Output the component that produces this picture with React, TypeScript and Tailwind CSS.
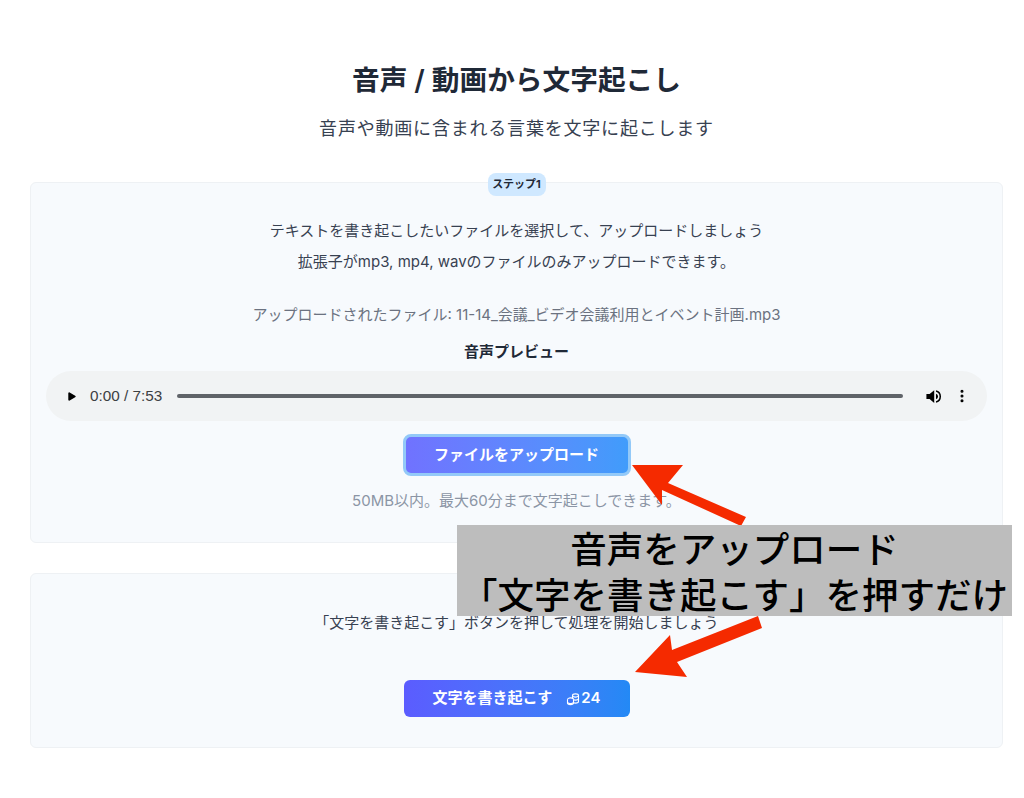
import { Play, MoreVertical } from "lucide-react";

const fontStack = "font-['Inter','Noto_Sans_CJK_JP',sans-serif]";

function CoinsIcon() {
  return (
    <svg width="14" height="14" viewBox="0 0 14 14" fill="none" stroke="currentColor" strokeWidth="1.1">
      <ellipse cx="9.5" cy="3.5" rx="3" ry="1.6" />
      <path d="M6.5 3.5v6c0 .9 1.3 1.6 3 1.6s3-.7 3-1.6v-6" />
      <path d="M6.5 6.5c0 .9 1.3 1.6 3 1.6s3-.7 3-1.6" />
      <ellipse cx="4.5" cy="7.5" rx="3" ry="1.6" fill="#3b74fb" />
      <path d="M1.5 7.5v3.5c0 .9 1.3 1.6 3 1.6s3-.7 3-1.6V7.5" fill="#3b74fb" />
      <path d="M1.5 10c0 .9 1.3 1.6 3 1.6s3-.7 3-1.6" />
    </svg>
  );
}

function SpeakerIcon() {
  return (
    <svg className="ml-[22px]" width="17" height="17" viewBox="0 0 24 24" fill="#000">
      <path d="M2 8.5v7h4.5L13 21V3L6.5 8.5z" />
      <path d="M15.5 8v8a4.2 4.2 0 0 0 0-8z" />
      <path d="M15.5 3.2v2.1a7 7 0 0 1 0 13.4v2.1a9 9 0 0 0 0-17.6z" />
    </svg>
  );
}

function AudioPreview() {
  return (
    <div className="mt-[9px] flex h-[50px] items-center rounded-full bg-[#f1f3f4] pl-[20px] pr-[17px]">
      <Play className="h-[11px] w-[11px] text-black" strokeWidth={0} style={{ fill: "#000" }} />
      <span className="ml-[13px] font-['Liberation_Sans',sans-serif] text-[15.3px] text-[#3c4043]">0:00 / 7:53</span>
      <div className="ml-[15px] h-[4px] flex-1 rounded-full bg-[#5f6368]" />
      <SpeakerIcon />
      <MoreVertical className="ml-[12px] h-[16px] w-[16px] text-black" strokeWidth={2.6} />
    </div>
  );
}

function Arrows() {
  return (
    <svg className="pointer-events-none absolute left-0 top-0" width="1024" height="798" viewBox="0 0 1024 798">
      <polygon points="632,465 683,465 668,483 746,517 741,526 662,490 662,505" fill="#f52a00" />
      <polygon points="635,672 670,635 672,650 758,616 762,628 677,662 687,677" fill="#f52a00" />
    </svg>
  );
}

export default function App() {
  return (
    <div className={`relative h-[798px] w-[1024px] overflow-hidden bg-white ${fontStack}`}>
      <div className="pl-[30px] pr-[21px] pt-[62px]">
        <h1 className="text-center text-[27.7px] font-semibold leading-[37px] text-[#1f2937]">音声 / 動画から文字起こし</h1>
        <p className="mt-[16px] text-center text-[18px] leading-[28px] tracking-[0.8px] text-[#374151]">
          音声や動画に含まれる言葉を文字に起こします
        </p>

        <section className="relative mt-[39px] h-[361px] rounded-md border border-[#eef1f4] bg-[#f7fafd] px-[15px] pt-[32px]">
          <span className="absolute left-1/2 top-[-10px] flex h-[23px] w-[58px] -translate-x-1/2 items-center justify-center rounded-lg bg-[#cfe8ff] text-[11px] font-bold text-[#1f2937]">
            ステップ1
          </span>
          <p className="text-center text-[15px] leading-[31px] text-[#374151]">
            テキストを書き起こしたいファイルを選択して、アップロードしましょう
          </p>
          <p className="text-center text-[15px] leading-[31px] text-[#374151]">
            拡張子がmp3, mp4, wavのファイルのみアップロードできます。
          </p>
          <p className="mt-[22px] text-center text-[15px] leading-[31px] text-[#6b7280]">
            アップロードされたファイル: 11-14_会議_ビデオ会議利用とイベント計画.mp3
          </p>
          <p className="mt-[12px] text-center text-[15px] font-bold leading-[20px] text-[#1f2937]">音声プレビュー</p>
          <AudioPreview />
          <div className="mt-[13px] flex justify-center">
            <button className="h-[42px] w-[228px] rounded-lg border-[3px] border-[#93c9f8] bg-gradient-to-r from-[#7072ff] to-[#409cfb] text-[15px] font-semibold text-white">
              ファイルをアップロード
            </button>
          </div>
          <p className="mt-[14px] text-center text-[15px] leading-[22px] text-[#8b95a5]">
            50MB以内。最大60分まで文字起こしできます。
          </p>
        </section>

        <section className="mt-[30px] h-[175px] rounded-md border border-[#eef1f4] bg-[#f7fafd] pt-[33px]">
          <p className="text-center text-[15px] leading-[31px] text-[#374151]">
            「文字を書き起こす」ボタンを押して処理を開始しましょう
          </p>
          <div className="mt-[42px] flex justify-center">
            <button className="flex h-[37px] w-[226px] items-center justify-center rounded-md bg-gradient-to-r from-[#5b5cff] to-[#2389f5] text-[15px] font-semibold text-white">
              文字を書き起こす
              <span className="ml-[14px] flex items-center">
                <CoinsIcon />
                <span className="ml-[1px]">24</span>
              </span>
            </button>
          </div>
        </section>
      </div>

      <Arrows />

      <div className="absolute left-[457px] top-[525px] flex h-[91px] w-[555px] flex-col items-center justify-center bg-[#bdbdbd] font-['Noto_Sans_CJK_JP',sans-serif] text-[36.5px] font-medium leading-[46px] text-black">
        <div>音声をアップロード</div>
        <div className="whitespace-nowrap">「文字を書き起こす」を押すだけ</div>
      </div>
    </div>
  );
}
